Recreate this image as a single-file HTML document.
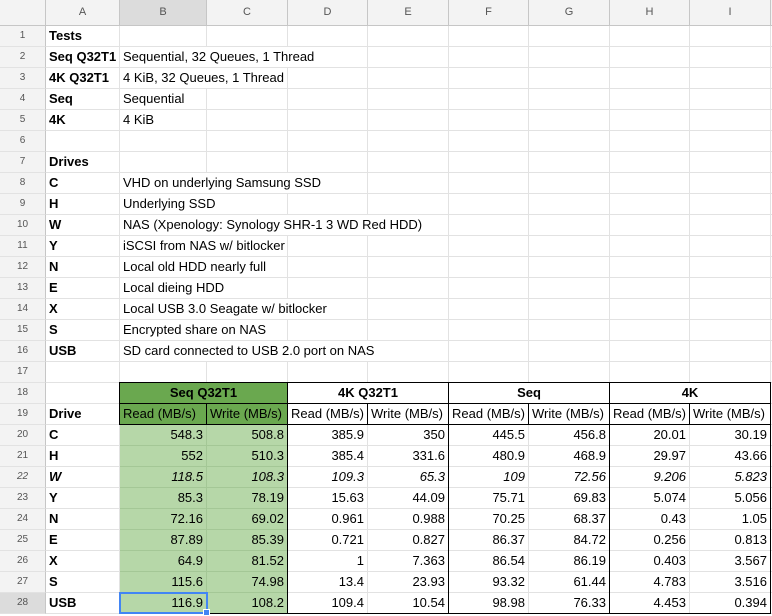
<!DOCTYPE html>
<html><head><meta charset="utf-8"><style>
*{margin:0;padding:0;box-sizing:border-box}
body{width:772px;height:616px;overflow:hidden;background:#fff;font-family:"Liberation Sans",Arial,sans-serif;font-size:13px;color:#000;position:relative}
.row{display:grid;grid-template-columns:46px 74px 87px 81px 80px 81px 80px 81px 80px 81px 1px;height:21px}
.row>div{border-right:1px solid #e2e2e2;border-bottom:1px solid #e2e2e2;padding:0 3px;line-height:20px;white-space:nowrap;overflow:hidden}
.hd{height:26px}
.hd>div{background:#f3f3f3;border-right:1px solid #c6c6c6!important;border-bottom:1px solid #c6c6c6!important;text-align:center;font-size:11px;color:#555;line-height:25px}
.row>div.n{background:#f3f3f3;border-right:1px solid #c6c6c6;text-align:center;font-size:10px;color:#555;padding:0}
.row>div.sel{background:#dcdcdc}
.b{font-weight:bold}.r{text-align:right}.c{text-align:center}.i{font-style:italic}
.row>div.g{background:#6aa84f;border-color:#5a9442}
.row>div.l{background:#b6d7a8;border-color:#a4c796}
.s2{grid-column:span 2}.s3{grid-column:span 3}.s4{grid-column:span 4}
.k{position:absolute;background:#000}
</style></head><body>
<div class="row hd"><div></div><div>A</div><div class="sel">B</div><div>C</div><div>D</div><div>E</div><div>F</div><div>G</div><div>H</div><div>I</div><div></div></div>
<div class="row"><div class="n">1</div><div class="b">Tests</div><div></div><div></div><div></div><div></div><div></div><div></div><div></div><div></div><div></div></div>
<div class="row"><div class="n">2</div><div class="b">Seq Q32T1</div><div class="s3">Sequential, 32 Queues, 1 Thread</div><div></div><div></div><div></div><div></div><div></div><div></div></div>
<div class="row"><div class="n">3</div><div class="b">4K Q32T1</div><div class="s2">4 KiB, 32 Queues, 1 Thread</div><div></div><div></div><div></div><div></div><div></div><div></div><div></div></div>
<div class="row"><div class="n">4</div><div class="b">Seq</div><div>Sequential</div><div></div><div></div><div></div><div></div><div></div><div></div><div></div><div></div></div>
<div class="row"><div class="n">5</div><div class="b">4K</div><div>4 KiB</div><div></div><div></div><div></div><div></div><div></div><div></div><div></div><div></div></div>
<div class="row"><div class="n">6</div><div></div><div></div><div></div><div></div><div></div><div></div><div></div><div></div><div></div><div></div></div>
<div class="row"><div class="n">7</div><div class="b">Drives</div><div></div><div></div><div></div><div></div><div></div><div></div><div></div><div></div><div></div></div>
<div class="row"><div class="n">8</div><div class="b">C</div><div class="s3">VHD on underlying Samsung SSD</div><div></div><div></div><div></div><div></div><div></div><div></div></div>
<div class="row"><div class="n">9</div><div class="b">H</div><div class="s2">Underlying SSD</div><div></div><div></div><div></div><div></div><div></div><div></div><div></div></div>
<div class="row"><div class="n">10</div><div class="b">W</div><div class="s4">NAS (Xpenology: Synology SHR-1 3 WD Red HDD)</div><div></div><div></div><div></div><div></div><div></div></div>
<div class="row"><div class="n">11</div><div class="b">Y</div><div class="s2">iSCSI from NAS w/ bitlocker</div><div></div><div></div><div></div><div></div><div></div><div></div><div></div></div>
<div class="row"><div class="n">12</div><div class="b">N</div><div class="s2">Local old HDD nearly full</div><div></div><div></div><div></div><div></div><div></div><div></div><div></div></div>
<div class="row"><div class="n">13</div><div class="b">E</div><div class="s2">Local dieing HDD</div><div></div><div></div><div></div><div></div><div></div><div></div><div></div></div>
<div class="row"><div class="n">14</div><div class="b">X</div><div class="s3">Local USB 3.0 Seagate w/ bitlocker</div><div></div><div></div><div></div><div></div><div></div><div></div></div>
<div class="row"><div class="n">15</div><div class="b">S</div><div class="s2">Encrypted share on NAS</div><div></div><div></div><div></div><div></div><div></div><div></div><div></div></div>
<div class="row"><div class="n">16</div><div class="b">USB</div><div class="s4">SD card connected to USB 2.0 port on NAS</div><div></div><div></div><div></div><div></div><div></div></div>
<div class="row"><div class="n">17</div><div></div><div></div><div></div><div></div><div></div><div></div><div></div><div></div><div></div><div></div></div>
<div class="row"><div class="n">18</div><div></div><div class="g s2 b c">Seq Q32T1</div><div class="s2 b c">4K Q32T1</div><div class="s2 b c">Seq</div><div class="s2 b c">4K</div><div></div></div>
<div class="row"><div class="n">19</div><div class="b">Drive</div><div class="g">Read (MB/s)</div><div class="g">Write (MB/s)</div><div>Read (MB/s)</div><div>Write (MB/s)</div><div>Read (MB/s)</div><div>Write (MB/s)</div><div>Read (MB/s)</div><div>Write (MB/s)</div><div></div></div>
<div class="row r"><div class="n">20</div><div class="b" style="text-align:left">C</div><div class="l">548.3</div><div class="l">508.8</div><div>385.9</div><div>350</div><div>445.5</div><div>456.8</div><div>20.01</div><div>30.19</div><div></div></div>
<div class="row r"><div class="n">21</div><div class="b" style="text-align:left">H</div><div class="l">552</div><div class="l">510.3</div><div>385.4</div><div>331.6</div><div>480.9</div><div>468.9</div><div>29.97</div><div>43.66</div><div></div></div>
<div class="row r i"><div class="n">22</div><div class="b" style="text-align:left">W</div><div class="l">118.5</div><div class="l">108.3</div><div>109.3</div><div>65.3</div><div>109</div><div>72.56</div><div>9.206</div><div>5.823</div><div></div></div>
<div class="row r"><div class="n">23</div><div class="b" style="text-align:left">Y</div><div class="l">85.3</div><div class="l">78.19</div><div>15.63</div><div>44.09</div><div>75.71</div><div>69.83</div><div>5.074</div><div>5.056</div><div></div></div>
<div class="row r"><div class="n">24</div><div class="b" style="text-align:left">N</div><div class="l">72.16</div><div class="l">69.02</div><div>0.961</div><div>0.988</div><div>70.25</div><div>68.37</div><div>0.43</div><div>1.05</div><div></div></div>
<div class="row r"><div class="n">25</div><div class="b" style="text-align:left">E</div><div class="l">87.89</div><div class="l">85.39</div><div>0.721</div><div>0.827</div><div>86.37</div><div>84.72</div><div>0.256</div><div>0.813</div><div></div></div>
<div class="row r"><div class="n">26</div><div class="b" style="text-align:left">X</div><div class="l">64.9</div><div class="l">81.52</div><div>1</div><div>7.363</div><div>86.54</div><div>86.19</div><div>0.403</div><div>3.567</div><div></div></div>
<div class="row r"><div class="n">27</div><div class="b" style="text-align:left">S</div><div class="l">115.6</div><div class="l">74.98</div><div>13.4</div><div>23.93</div><div>93.32</div><div>61.44</div><div>4.783</div><div>3.516</div><div></div></div>
<div class="row r"><div class="n sel">28</div><div class="b" style="text-align:left">USB</div><div class="l">116.9</div><div class="l">108.2</div><div>109.4</div><div>10.54</div><div>98.98</div><div>76.33</div><div>4.453</div><div>0.394</div><div></div></div>

<div class="k" style="left:119px;top:382px;width:652px;height:1px"></div>
<div class="k" style="left:119px;top:403px;width:652px;height:1px"></div>
<div class="k" style="left:119px;top:424px;width:652px;height:1px"></div>
<div class="k" style="left:119px;top:613px;width:652px;height:1px"></div>
<div class="k" style="left:119px;top:382px;width:1px;height:43px"></div>
<div class="k" style="left:206px;top:403px;width:1px;height:22px"></div>
<div class="k" style="left:367px;top:403px;width:1px;height:22px"></div>
<div class="k" style="left:528px;top:403px;width:1px;height:22px"></div>
<div class="k" style="left:689px;top:403px;width:1px;height:22px"></div>
<div class="k" style="left:287px;top:382px;width:1px;height:232px"></div>
<div class="k" style="left:448px;top:382px;width:1px;height:232px"></div>
<div class="k" style="left:609px;top:382px;width:1px;height:232px"></div>
<div class="k" style="left:770px;top:382px;width:1px;height:232px"></div>
<div style="position:absolute;left:119px;top:592px;width:89px;height:22px;border:2px solid #4285f4"></div>
<div style="position:absolute;left:203px;top:609px;width:7px;height:7px;background:#4285f4;border:1px solid #fff"></div>
</body></html>
